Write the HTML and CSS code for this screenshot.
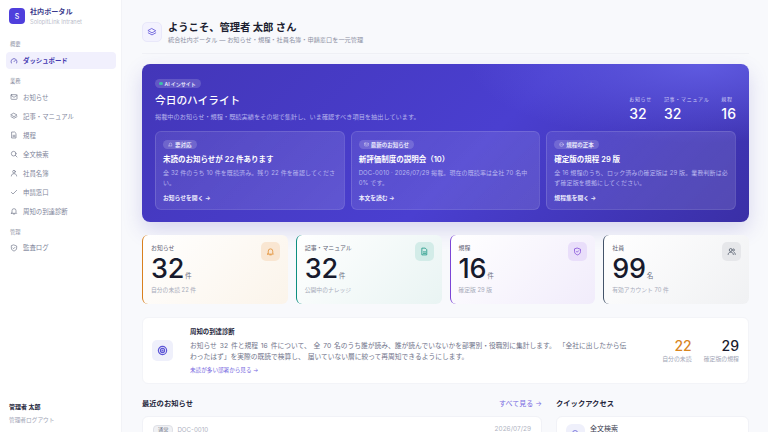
FILE: index.html
```html
<!DOCTYPE html>
<html lang="ja">
<head>
<meta charset="utf-8">
<title>社内ポータル</title>
<link rel="stylesheet" href="styles.css">
</head>
<body>
<div class="app">
  <aside class="sidebar">
    <div class="brand">
      <div class="logo">S</div>
      <div>
        <div class="brand-name">社内ポータル</div>
        <div class="brand-sub">SolopitLink Intranet</div>
      </div>
    </div>
    <div class="nav-label first">概要</div>
    <a class="nav-item active"><svg viewBox="0 0 24 24"><path d="M4 18a9 9 0 1 1 16 0"/><path d="M12 14l4-4"/></svg>ダッシュボード</a>
    <div class="nav-label">業務</div>
    <a class="nav-item"><svg viewBox="0 0 24 24"><rect x="3" y="5" width="18" height="14" rx="2"/><path d="M3 7l9 6 9-6"/></svg>お知らせ</a>
    <a class="nav-item"><svg viewBox="0 0 24 24"><path d="M12 4l9 5-9 5-9-5z"/><path d="M3 14l9 5 9-5"/></svg>記事・マニュアル</a>
    <a class="nav-item"><svg viewBox="0 0 24 24"><path d="M6 3h8l4 4v14H6z"/><path d="M9 13h6M9 17h6"/></svg>規程</a>
    <a class="nav-item"><svg viewBox="0 0 24 24"><circle cx="11" cy="11" r="7"/><path d="M16 16l5 5"/></svg>全文検索</a>
    <a class="nav-item"><svg viewBox="0 0 24 24"><circle cx="12" cy="8" r="4"/><path d="M4 21c0-5 4-7 8-7s8 2 8 7"/></svg>社員名簿</a>
    <a class="nav-item"><svg viewBox="0 0 24 24"><path d="M4 13l5 5L20 7"/></svg>申請窓口</a>
    <a class="nav-item"><svg viewBox="0 0 24 24"><path d="M6 17V11a6 6 0 0 1 12 0v6l2 2H4z"/><path d="M10 21h4"/></svg>周知の到達診断</a>
    <div class="nav-label">管理</div>
    <a class="nav-item"><svg viewBox="0 0 24 24"><path d="M12 3l8 3v6c0 5-4 8-8 9-4-1-8-4-8-9V6z"/><path d="M9 12l2 2 4-4"/></svg>監査ログ</a>
    <div class="user">
      <div class="user-name">管理者 太郎</div>
      <div class="user-sub">管理者ログアウト</div>
    </div>
  </aside>

  <main class="main">
    <header class="page-head">
      <div class="head-icon"><svg viewBox="0 0 24 24"><path d="M12 4l9 5-9 5-9-5z"/><path d="M3 14l9 5 9-5"/></svg></div>
      <div>
        <h1>ようこそ、管理者 太郎 さん</h1>
        <p>統合社内ポータル — お知らせ・規程・社員名簿・申請窓口を一元管理</p>
      </div>
    </header>

    <section class="hero">
      <div class="hero-top">
        <div>
          <span class="pill-ai"><i></i>AI インサイト</span>
          <h2>今日のハイライト</h2>
          <p class="hero-desc">掲載中のお知らせ・規程・既読実績をその場で集計し、いま確認すべき項目を抽出しています。</p>
        </div>
        <div class="hero-stats">
          <div class="hs"><span>お知らせ</span><b>32</b></div>
          <div class="hs"><span>記事・マニュアル</span><b>32</b></div>
          <div class="hs end"><span>規程</span><b>16</b></div>
        </div>
      </div>
      <div class="hero-cards">
        <div class="hc">
          <span class="tag"><svg viewBox="0 0 24 24"><path d="M6 17V11a6 6 0 0 1 12 0v6l2 2H4z"/></svg>要対応</span>
          <h3>未読のお知らせが 22 件あります</h3>
          <p>全 32 件のうち 10 件を既読済み。残り 22 件を確認してくださ<br>い。</p>
          <a>お知らせを開く →</a>
        </div>
        <div class="hc">
          <span class="tag"><svg viewBox="0 0 24 24"><rect x="3" y="5" width="18" height="14" rx="2"/><path d="M3 8l9 6 9-6"/></svg>最新のお知らせ</span>
          <h3>新評価制度の説明会（10）</h3>
          <p>DOC-0010 · 2026/07/29 掲載。現在の既読率は全社 70 名中<br>0% です。</p>
          <a>本文を読む →</a>
        </div>
        <div class="hc">
          <span class="tag"><svg viewBox="0 0 24 24"><circle cx="12" cy="12" r="9"/><path d="M8 12l3 3 5-5"/></svg>規程の正本</span>
          <h3>確定版の規程 29 版</h3>
          <p>全 16 規程のうち、ロック済みの確定版は 29 版。業務判断は必<br>ず確定版を根拠にしてください。</p>
          <a>規程集を開く →</a>
        </div>
      </div>
    </section>

    <section class="stats">
      <div class="stat orange">
        <div class="stat-label">お知らせ</div>
        <div class="stat-value"><b>32</b><span>件</span></div>
        <div class="stat-note">自分の未読 22 件</div>
        <div class="stat-icon"><svg viewBox="0 0 24 24"><path d="M6 17V11a6 6 0 0 1 12 0v6l2 2H4z"/><path d="M10 21h4"/></svg></div>
      </div>
      <div class="stat teal">
        <div class="stat-label">記事・マニュアル</div>
        <div class="stat-value"><b>32</b><span>件</span></div>
        <div class="stat-note">公開中のナレッジ</div>
        <div class="stat-icon"><svg viewBox="0 0 24 24"><path d="M6 3h8l4 4v14H6z"/><path d="M9 13h6M9 17h6"/></svg></div>
      </div>
      <div class="stat purple">
        <div class="stat-label">規程</div>
        <div class="stat-value"><b>16</b><span>件</span></div>
        <div class="stat-note">確定版 29 版</div>
        <div class="stat-icon"><svg viewBox="0 0 24 24"><path d="M12 3l8 3v6c0 5-4 8-8 9-4-1-8-4-8-9V6z"/><path d="M9 12l2 2 4-4"/></svg></div>
      </div>
      <div class="stat slate">
        <div class="stat-label">社員</div>
        <div class="stat-value"><b>99</b><span>名</span></div>
        <div class="stat-note">有効アカウント 70 件</div>
        <div class="stat-icon"><svg viewBox="0 0 24 24"><circle cx="10" cy="8" r="4"/><path d="M3 20c0-4 3-6 7-6s7 2 7 6"/><path d="M17 5a3 3 0 0 1 0 6M19 14c2 1 3 3 3 6"/></svg></div>
      </div>
    </section>

    <section class="diag">
      <div class="diag-icon"><svg viewBox="0 0 24 24"><circle cx="12" cy="12" r="9"/><circle cx="12" cy="12" r="4.5"/><circle cx="12" cy="12" r="1"/></svg></div>
      <div class="diag-body">
        <h3>周知の到達診断</h3>
        <p>お知らせ 32 件と規程 16 件について、 全 70 名のうち誰が読み、誰が読んでいないかを部署別・役職別に集計します。 「全社に出したから伝<br>わったはず」を実際の既読で検算し、 届いていない層に絞って再周知できるようにします。</p>
        <a>未読が多い部署から見る →</a>
      </div>
      <div class="diag-num"><b class="amber">22</b><span>自分の未読</span></div>
      <div class="diag-num"><b>29</b><span>確定版の規程</span></div>
    </section>

    <section class="lower">
      <div class="col-news">
        <div class="sec-head"><h3>最近のお知らせ</h3><a>すべて見る →</a></div>
        <div class="panel news">
          <span class="chip">通常</span><span class="doc">DOC-0010</span><span class="date">2026/07/29</span>
        </div>
      </div>
      <div class="col-quick">
        <div class="sec-head"><h3>クイックアクセス</h3></div>
        <div class="panel quick">
          <div class="q-icon"><svg viewBox="0 0 24 24"><circle cx="11" cy="11" r="7"/><path d="M16 16l5 5"/></svg></div>
          <div class="q-title">全文検索</div>
        </div>
      </div>
    </section>
  </main>
</div>
</body>
</html>
```
FILE: styles.css
```css
* { box-sizing: border-box; }
html, body { margin: 0; height: 432px; overflow: hidden; }
body { font-family: Inter, "Noto Sans CJK JP", sans-serif; background: #f8f9fc; color: #1a1c2e; }
h1, h2, h3, p { margin: 0; }
svg { fill: none; stroke: currentColor; stroke-width: 2; stroke-linecap: round; stroke-linejoin: round; display: block; }
.app { display: flex; height: 432px; overflow: hidden; }

.sidebar { width: 122px; flex: none; height: 432px; background: #fff; border-right: 1px solid #f2f3f7; padding: 8px 5px 0 6px; display: flex; flex-direction: column; }
.brand { display: flex; align-items: center; gap: 5px; padding: 0 3px; height: 16px; flex: none; }
.logo { width: 16px; height: 16px; border-radius: 4px; background: #4f3fdc; color: #fff; font-size: 7px; font-weight: 500; display: flex; align-items: center; justify-content: center; flex: none; }
.brand-name { font-size: 7.1px; font-weight: 700; color: #3b3a8c; line-height: 10px; }
.brand-sub { font-size: 5.7px; color: #bcc0cc; line-height: 8px; margin-top: 1px; }
.nav-label { font-size: 5.3px; color: #8e93a5; padding: 0 4px; line-height: 8px; margin: 6px 0 3.5px; flex: none; }
.nav-label.first { margin: 16px 0 4px; }
.nav-item { display: flex; align-items: center; gap: 5px; height: 17px; margin-bottom: 2px; padding: 0 4px; border-radius: 4px; font-size: 6.4px; color: #80859a; flex: none; }
.nav-item svg { width: 8px; height: 8px; flex: none; color: #70758a; }
.nav-item.active { background: #f1f0fd; color: #4338b0; font-weight: 700; }
.nav-item.active svg { color: #4338b0; }
.user { margin-top: auto; padding: 0 3px 8px; }
.user-name { font-size: 6px; font-weight: 700; color: #23253a; line-height: 9px; }
.user-sub { font-size: 5.7px; color: #a2a6b6; line-height: 9px; margin-top: 4px; }

.main { flex: 1; min-width: 0; padding: 22px 19px 0 20px; display: flex; flex-direction: column; }
.main > * { flex: none; }
.page-head { display: flex; align-items: center; gap: 6px; border-bottom: 1px solid #f0f1f6; padding-bottom: 11px; box-sizing: content-box; height: 20px; margin-bottom: 10px; }
.head-icon { width: 20px; height: 20px; border-radius: 5px; background: #f3f2fe; border: 1px solid #e9e8fa; color: #6156d8; display: flex; align-items: center; justify-content: center; flex: none; }
.head-icon svg { width: 10px; height: 10px; }
.page-head h1 { font-size: 10.3px; font-weight: 700; line-height: 13px; color: #1c1e30; }
.page-head p { font-size: 6.2px; color: #8c90a3; line-height: 9px; margin-top: 1px; }

.hero { height: 158px; border-radius: 8px; padding: 14.5px 13px 12px; background: radial-gradient(ellipse 38% 50% at 92% 0%, #5f5ae0 0%, rgba(95,90,224,0) 100%), linear-gradient(135deg, #4336b8 0%, #4a3fd0 55%, #3a2fa6 100%); box-shadow: 0 8px 20px rgba(67,56,180,.18); color: #fff; display: flex; flex-direction: column; justify-content: space-between; }
.hero-top { display: flex; justify-content: space-between; }
.pill-ai { display: flex; width: fit-content; align-items: center; gap: 2px; height: 9.5px; padding: 0 5px 0 4px; border-radius: 5px; background: rgba(255,255,255,.16); font-size: 5px; font-weight: 600; color: #e6e6fb; }
.pill-ai i { width: 3.5px; height: 3.5px; border-radius: 50%; background: #3dbfa8; }
.hero h2 { font-size: 10.7px; font-weight: 500; line-height: 15px; margin-top: 5px; }
.hero-desc { font-size: 6.2px; color: #b5b3ec; line-height: 9px; margin-top: 4px; }
.hero-stats { display: flex; gap: 12px; padding-top: 17px; }
.hs { display: flex; flex-direction: column; align-items: flex-start; }
.hs span { font-size: 5px; letter-spacing: .7px; color: #cfcdf5; line-height: 7px; white-space: nowrap; }
.hs b { font-size: 14px; font-weight: 500; line-height: 19px; margin-top: 1px; }
.hs.end b { align-self: flex-end; }
.hero-cards { display: grid; grid-template-columns: repeat(3, 1fr); gap: 6px; height: 79px; }
.hc { border-radius: 6px; border: 1px solid rgba(255,255,255,.11); background: linear-gradient(135deg, rgba(255,255,255,.08), rgba(255,255,255,.13)); padding: 8px 7px 0; display: flex; flex-direction: column; align-items: flex-start; }
.tag { display: inline-flex; align-items: center; gap: 2px; height: 9px; padding: 0 5px; border-radius: 5px; background: rgba(255,255,255,.16); font-size: 5.5px; font-weight: 600; color: #e8e7fb; }
.tag svg { width: 5px; height: 5px; }
.hc h3 { font-size: 7.5px; font-weight: 600; line-height: 11px; margin-top: 5px; color: #fff; }
.hc p { font-size: 6px; letter-spacing: .1px; line-height: 10px; margin-top: 2.5px; color: #b7b5ee; white-space: nowrap; }
.hc a { font-size: 5.8px; font-weight: 600; color: #ecebfd; line-height: 8px; margin-top: 6px; }

.stats { display: grid; grid-template-columns: repeat(4, 1fr); gap: 8px; margin-top: 12.5px; height: 69.5px; }
.stat { position: relative; border-radius: 6px; border-left: 1.5px solid; padding: 9px 8px 0; }
.stat.orange { border-color: #d9801e; background: linear-gradient(135deg, #fff 0%, #fbf4ea 100%); }
.stat.teal { border-color: #0e8f80; background: linear-gradient(135deg, #fff 0%, #e9f4f3 100%); }
.stat.purple { border-color: #7c46d6; background: linear-gradient(135deg, #fff 0%, #f1ecfb 100%); }
.stat.slate { border-color: #44546a; background: linear-gradient(135deg, #fff 0%, #f0f1f3 100%); }
.stat-label { font-size: 5.9px; color: #5e6274; line-height: 8px; }
.stat-value { display: flex; align-items: baseline; gap: 1px; margin-top: 1px; }
.stat-value b { font-size: 27px; font-weight: 500; line-height: 32px; color: #171a2c; letter-spacing: -.3px; }
.stat-value span { font-size: 6.6px; color: #6c7082; }
.stat-note { font-size: 5.8px; color: #a7abba; line-height: 8px; margin-top: 1.5px; }
.stat-icon { position: absolute; top: 7.5px; right: 8px; width: 19px; height: 19px; border-radius: 5px; display: flex; align-items: center; justify-content: center; }
.stat-icon svg { width: 9px; height: 9px; }
.orange .stat-icon { background: #f9e6d2; color: #e08a2a; }
.teal .stat-icon { background: #d3ece8; color: #12917f; }
.purple .stat-icon { background: #e9defa; color: #7c46d6; }
.slate .stat-icon { background: #e6e7ea; color: #4c5566; }

.diag { display: flex; align-items: center; margin-top: 12.5px; height: 67px; background: #fff; border: 1px solid #f3f4f8; border-radius: 6px; padding: 0 9px; }
.diag-icon { width: 21px; height: 21px; border-radius: 5px; background: #eff0fb; color: #5c55d6; display: flex; align-items: center; justify-content: center; flex: none; margin-right: 17px; }
.diag-icon svg { width: 11px; height: 11px; stroke-width: 2.6; }
.diag-body { width: 460px; flex: none; padding-top: 2px; }
.diag-body h3 { font-size: 6.4px; font-weight: 700; color: #23253a; line-height: 9px; }
.diag-body p { font-size: 6.75px; word-spacing: 1px; line-height: 11px; color: #70748a; margin-top: 3px; }
.diag-body a { display: block; font-size: 5.6px; color: #7365e0; line-height: 8px; margin-top: 4px; }
.diag-num { display: flex; flex-direction: column; align-items: flex-end; margin-left: 12px; }
.diag-body + .diag-num { margin-left: auto; }
.diag-num b { font-size: 14px; font-weight: 500; line-height: 17px; color: #1a1c2e; }
.diag-num b.amber { color: #d9861f; }
.diag-num span { font-size: 5.9px; color: #a2a6b6; line-height: 8px; margin-top: 1px; white-space: nowrap; }

.lower { display: flex; gap: 14px; margin-top: 13px; }
.col-news { width: 400px; flex: none; }
.col-quick { flex: 1; }
.sec-head { display: flex; justify-content: space-between; align-items: center; height: 12px; margin-bottom: 7.5px; }
.sec-head h3 { font-size: 7.3px; font-weight: 700; color: #23253a; }
.sec-head a { font-size: 7px; color: #7a6de2; }
.panel { background: #fff; border: 1px solid #f1f2f7; border-radius: 6px; height: 60px; }
.news { padding: 8px 10px; display: flex; align-items: flex-start; gap: 4px; }
.chip { font-size: 5.2px; line-height: 8px; padding: 0 4px; border-radius: 4px; background: #f0f1f4; border: 1px solid #dfe1e7; color: #6c7082; }
.doc { font-size: 6.2px; color: #b0b4c2; line-height: 10px; }
.date { margin-left: auto; font-size: 6.5px; color: #b0b4c2; line-height: 9px; }
.quick { padding: 7px 9px; display: flex; gap: 5px; }
.q-icon { width: 19px; height: 19px; border-radius: 6px; background: #eff0fb; color: #5c55d6; display: flex; align-items: center; justify-content: center; flex: none; }
.q-icon svg { width: 9px; height: 9px; }
.q-title { font-size: 7px; color: #3a3d50; line-height: 10px; }
```
